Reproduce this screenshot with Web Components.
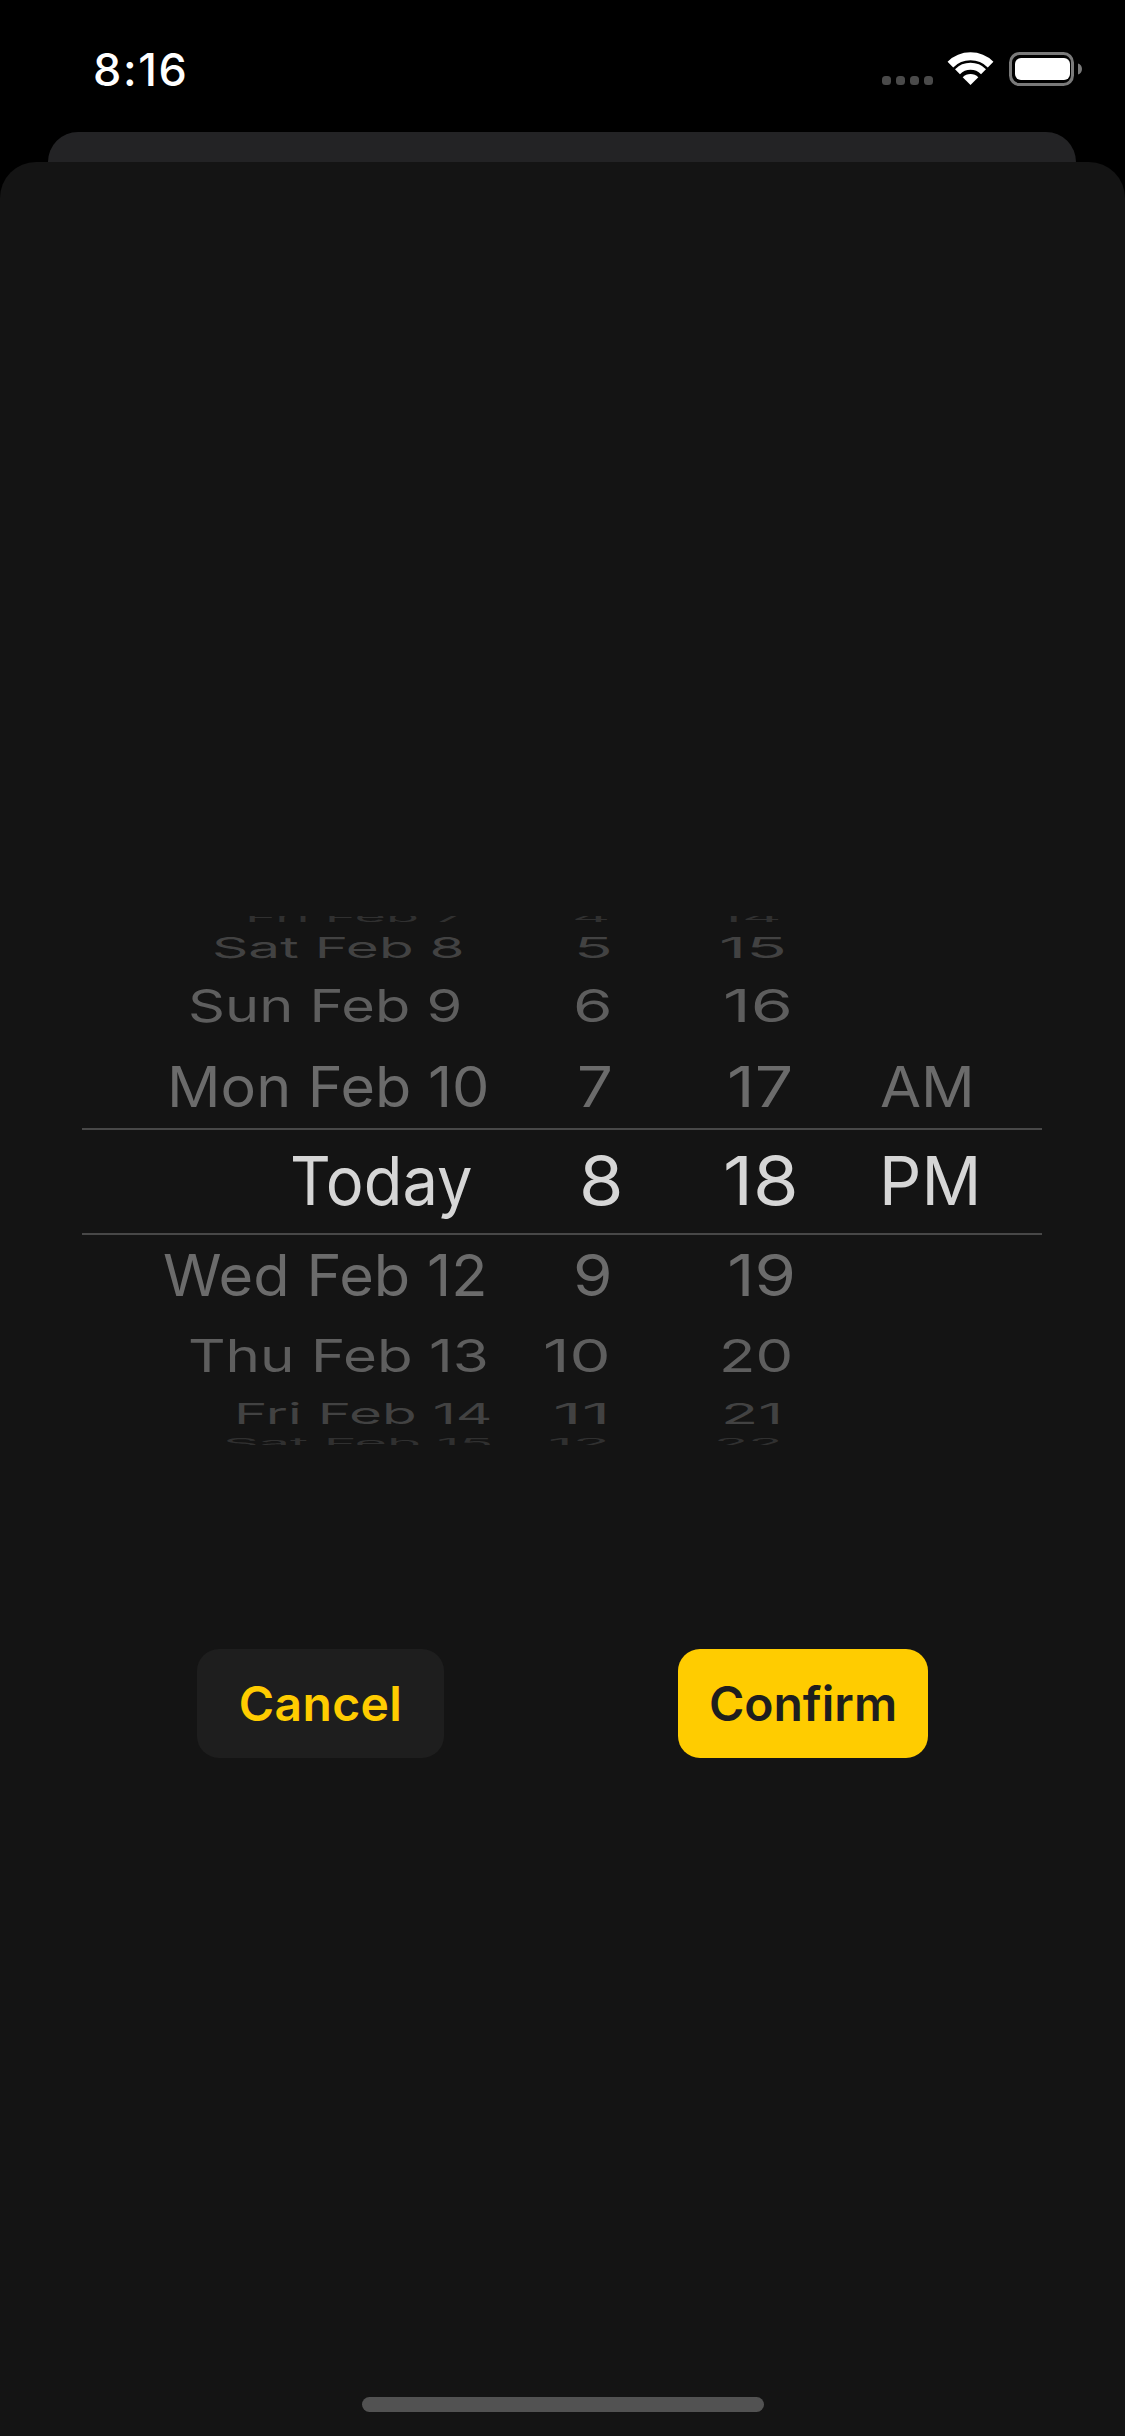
<!DOCTYPE html>
<html>
<head>
<meta charset="utf-8">
<title>Date picker</title>
<style>
html, body {
    margin: 0;
    height: 100%;
    background: #000;
}
body {
    display: flex;
    flex-direction: column;
    width: 1125px;
    height: 2436px;
    overflow: hidden;
    font-family: Inter, "Liberation Sans", sans-serif;
}
</style>
</head>
<body>

<status-bar time="8:16"></status-bar>
<back-card></back-card>
<picker-sheet>
    <wheel-picker>
        <wheel-row h="15" cap="10" tone="#303030">
            <wheel-cell r="38" w="214">Fri Feb 7</wheel-cell>
            <wheel-cell r="18" w="32">4</wheel-cell>
            <wheel-cell r="21" w="59">14</wheel-cell>
        </wheel-row>
        <wheel-row h="36" cap="21" tone="#424242">
            <wheel-cell r="38" w="247">Sat Feb 8</wheel-cell>
            <wheel-cell r="15" w="33">5</wheel-cell>
            <wheel-cell r="16" w="62">15</wheel-cell>
        </wheel-row>
        <wheel-row h="64" cap="33" tone="#5e5e5e">
            <wheel-cell r="41" w="268">Sun Feb 9</wheel-cell>
            <wheel-cell r="15" w="34">6</wheel-cell>
            <wheel-cell r="10" w="64">16</wheel-cell>
        </wheel-row>
        <wheel-row h="85" cap="41" tone="#6b6b6b">
            <wheel-cell r="14" w="316">Mon Feb 10</wheel-cell>
            <wheel-cell r="15" w="30">7</wheel-cell>
            <wheel-cell r="10" w="60">17</wheel-cell>
            <wheel-cell r="70" w="89">AM</wheel-cell>
        </wheel-row>
        <wheel-row h="98" cap="49" tone="#d6d6d6">
            <wheel-cell r="30" w="177">Today</wheel-cell>
            <wheel-cell r="5" w="38">8</wheel-cell>
            <wheel-cell r="4" w="70">18</wheel-cell>
            <wheel-cell r="64" w="96">PM</wheel-cell>
        </wheel-row>
        <wheel-row h="91" cap="42" tone="#6b6b6b">
            <wheel-cell r="16" w="319">Wed Feb 12</wheel-cell>
            <wheel-cell r="15" w="34">9</wheel-cell>
            <wheel-cell r="7" w="63">19</wheel-cell>
        </wheel-row>
        <wheel-row h="76" cap="33" tone="#5e5e5e">
            <wheel-cell r="14" w="295">Thu Feb 13</wheel-cell>
            <wheel-cell r="17" w="62">10</wheel-cell>
            <wheel-cell r="10" w="68">20</wheel-cell>
        </wheel-row>
        <wheel-row h="52" cap="21" tone="#424242">
            <wheel-cell r="11" w="252">Fri Feb 14</wheel-cell>
            <wheel-cell r="17" w="52">11</wheel-cell>
            <wheel-cell r="20" w="56">21</wheel-cell>
        </wheel-row>
        <wheel-row h="24" cap="10" tone="#303030">
            <wheel-cell r="10" w="264">Sat Feb 15</wheel-cell>
            <wheel-cell r="18" w="56">12</wheel-cell>
            <wheel-cell r="20" w="63">22</wheel-cell>
        </wheel-row>
    </wheel-picker>
    <action-row>
        <action-button>Cancel</action-button>
        <action-button primary>Confirm</action-button>
    </action-row>
    <home-indicator></home-indicator>
</picker-sheet>

<script>
class StatusBar extends HTMLElement {
    constructor(){
        super();
        this.attachShadow({mode: "open"});
        this.shadowRoot.innerHTML = `<style>
:host {
    display: flex;
    justify-content: space-between;
    align-items: flex-start;
    flex: none;
    height: 132px;
    padding: 47px 43px 0 93px;
    box-sizing: border-box;
    color: #fff;
}
#time {
    font: 500 45px/1 Inter, "Liberation Sans", sans-serif;
    letter-spacing: 1.6px;
}
svg {
    display: block;
    margin-top: 5px;
}
</style>
<span id="time"></span>
<svg width="200" height="34" viewBox="0 0 200 34">
    <g fill="#4a4a4a">
        <rect x="0" y="24" width="9" height="9" rx="3.5"/>
        <rect x="14" y="24" width="9" height="9" rx="3.5"/>
        <rect x="28" y="24" width="9" height="9" rx="3.5"/>
        <rect x="42" y="24" width="9" height="9" rx="3.5"/>
    </g>
    <g transform="translate(66 0)" fill="none" stroke="#fff">
        <path d="M2.4 12.6A28.4 28.4 0 0 1 42.6 12.6" stroke-width="8"/>
        <path d="M9.5 19.7A18.4 18.4 0 0 1 35.5 19.7" stroke-width="7"/>
        <path d="M22.5 33L14.7 25.2A11 11 0 0 1 30.3 25.2Z" fill="#fff" stroke="none"/>
    </g>
    <rect x="128.5" y="1.5" width="62" height="31" rx="9" fill="none" stroke="#7a7a7a" stroke-width="3"/>
    <rect x="133" y="6" width="55" height="22" rx="6" fill="#fff"/>
    <path d="M196 11.5C198.500 12.300 200 14.500 200 17C200 19.500 198.500 21.700 196 22.500Z" fill="#7a7a7a"/>
</svg>`
    }

    connectedCallback(){
        this.shadowRoot.getElementById("time").textContent = this.getAttribute("time")
    }
}

class BackCard extends HTMLElement {
    constructor(){
        super();
        this.attachShadow({mode: "open"});
        this.shadowRoot.innerHTML = `<style>
:host {
    display: block;
    flex: none;
    height: 30px;
    margin: 0 49px 0 48px;
    background: #232325;
    border-radius: 33px 33px 0 0;
}
</style>`
    }
}

class PickerSheet extends HTMLElement {
    constructor(){
        super();
        this.attachShadow({mode: "open"});
        this.shadowRoot.innerHTML = `<style>
:host {
    display: flex;
    flex-direction: column;
    flex: 1;
    min-height: 0;
    background: #141414;
    border-radius: 36px 36px 0 0;
}
</style>
<slot></slot>`
    }
}

class WheelPicker extends HTMLElement {
    constructor(){
        super();
        this.attachShadow({mode: "open"});
        this.shadowRoot.innerHTML = `<style>
:host {
    display: block;
    position: relative;
    flex: none;
    height: 529px;
    margin: 754px 83px 0 82px;
}
#clip {
    height: 100%;
    overflow: hidden;
}
#band {
    position: absolute;
    left: 0;
    right: 0;
    top: 212px;
    height: 103px;
    border-top: 2px solid #484848;
    border-bottom: 2px solid #484848;
    pointer-events: none;
}
</style>
<div id="clip"><slot></slot></div>
<div id="band"></div>`
    }
}

class WheelRow extends HTMLElement {
    constructor(){
        super();
        this.attachShadow({mode: "open"});
        this.shadowRoot.innerHTML = `<style>
:host {
    display: grid;
    grid-template-columns: 418px 125px 175px 242px;
    grid-template-rows: minmax(0, 1fr);
    align-items: end;
}
</style>
<slot></slot>`
    }

    connectedCallback(){
        this.style.height = this.getAttribute("h")+"px"
        this.style.color = this.getAttribute("tone")
        // the wheel flattens rows as they turn away; 49 is the cap height at full size
        this.style.setProperty("--sy", this.getAttribute("cap")/49)
    }
}

class WheelCell extends HTMLElement {
    constructor(){
        super();
        this.attachShadow({mode: "open"});
        this.shadowRoot.innerHTML = `<style>
:host {
    display: block;
    text-align: right;
    height: 67px;
    font: 400 67px/1 Inter, "Liberation Sans", sans-serif;
}
span {
    display: inline-block;
    white-space: nowrap;
    transform-origin: 100% 86.4%;
    transform: scale(var(--sx, 1), var(--sy, 1));
}
</style>
<span><slot></slot></span>`
    }

    connectedCallback(){
        // r and w describe the ink, the box is about 3px wider on each side
        this.style.marginRight = (this.getAttribute("r") - 3)+"px"
        let natural = this.shadowRoot.querySelector("span").offsetWidth
        this.style.setProperty("--sx", (+this.getAttribute("w") + 6)/natural)
    }
}

class ActionRow extends HTMLElement {
    constructor(){
        super();
        this.attachShadow({mode: "open"});
        this.shadowRoot.innerHTML = `<style>
:host {
    display: flex;
    flex: none;
    gap: 234px;
    margin: 204px 0 0 197px;
}
</style>
<slot></slot>`
    }
}

class ActionButton extends HTMLElement {
    constructor(){
        super();
        this.attachShadow({mode: "open"});
        this.shadowRoot.innerHTML = `<style>
:host {
    display: flex;
    align-items: center;
    justify-content: center;
    width: 247px;
    height: 109px;
    border-radius: 22px;
    background: #1e1e1e;
    color: #ffcc00;
    font: 600 48px/1 Inter, "Liberation Sans", sans-serif;
    letter-spacing: 0.4px;
}
:host([primary]) {
    width: 250px;
    background: #ffcc00;
    color: #1e1e1e;
    letter-spacing: 0;
}
</style>
<slot></slot>`
    }
}

class HomeIndicator extends HTMLElement {
    constructor(){
        super();
        this.attachShadow({mode: "open"});
        this.shadowRoot.innerHTML = `<style>
:host {
    display: block;
    flex: none;
    width: 402px;
    height: 15px;
    margin: auto 0 24px 362px;
    border-radius: 8px;
    background: #525252;
}
</style>`
    }
}

customElements.define("status-bar", StatusBar)
customElements.define("back-card", BackCard)
customElements.define("picker-sheet", PickerSheet)
customElements.define("wheel-picker", WheelPicker)
customElements.define("wheel-row", WheelRow)
customElements.define("wheel-cell", WheelCell)
customElements.define("action-row", ActionRow)
customElements.define("action-button", ActionButton)
customElements.define("home-indicator", HomeIndicator)
</script>
</body>
</html>
